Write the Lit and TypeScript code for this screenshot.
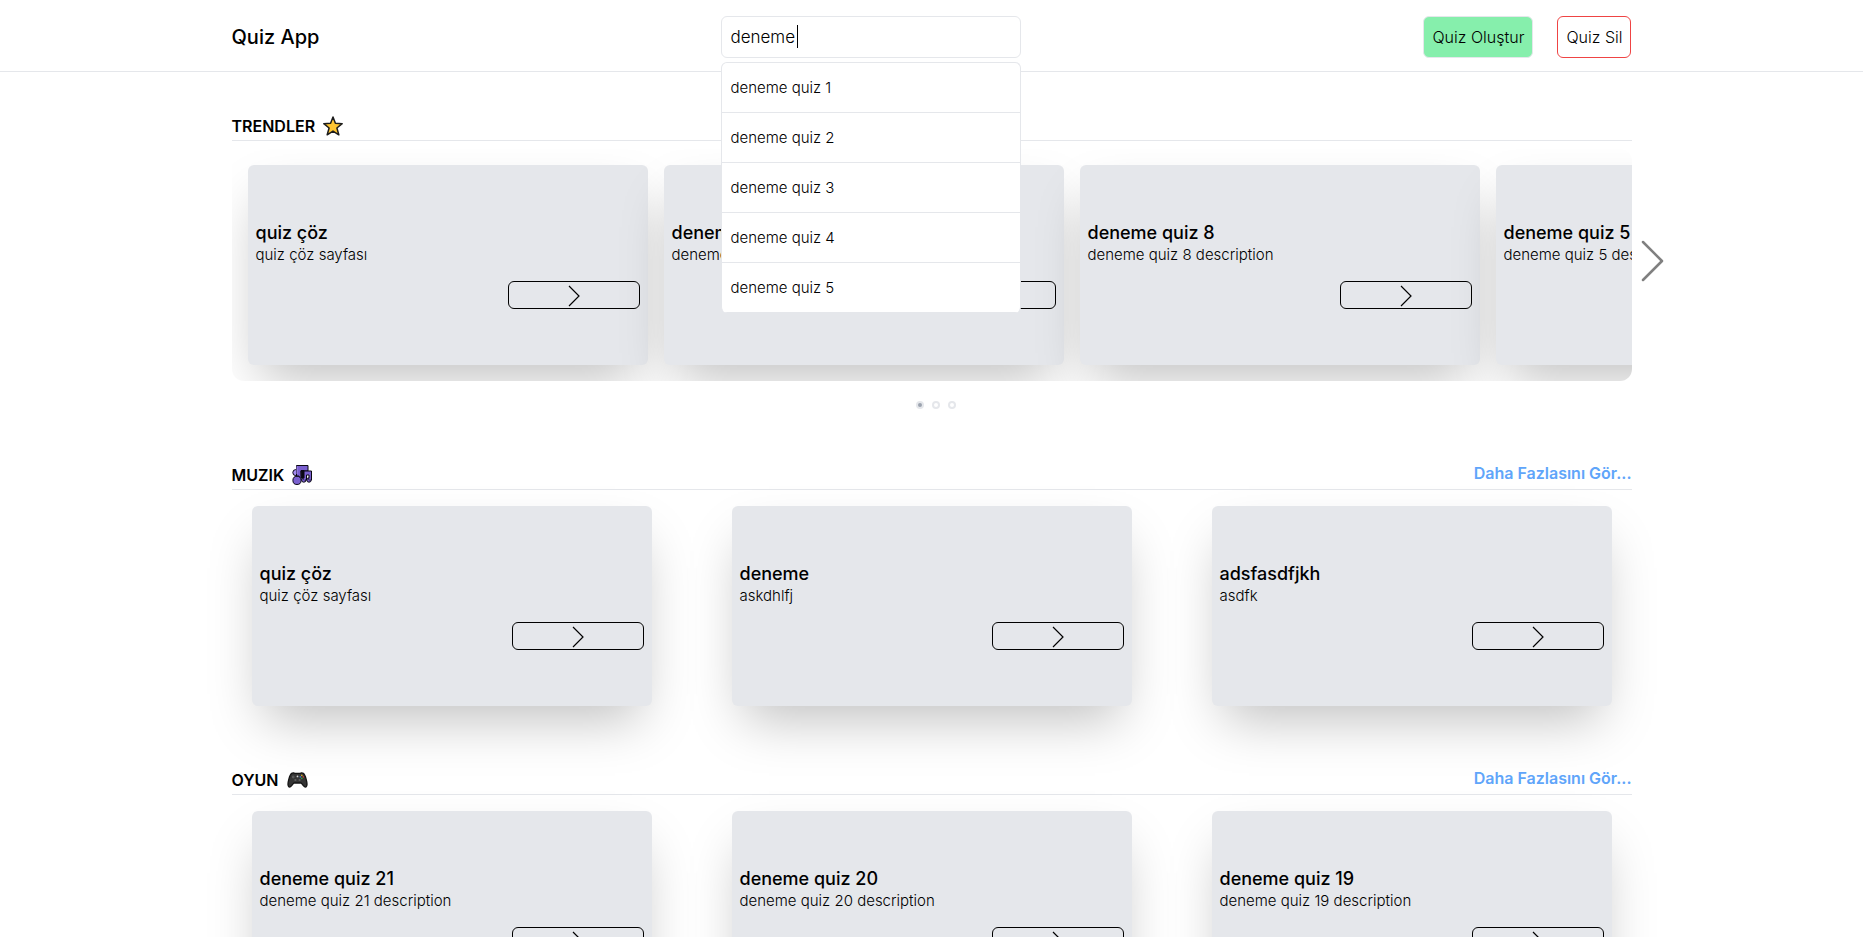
import { LitElement, html, css, svg } from "lit";
import { customElement, property, state } from "lit/decorators.js";

interface Quiz {
  title: string;
  description: string;
}

interface Category {
  name: string;
  icon: unknown;
  quizzes: Quiz[];
}

const quiz = (title: string, description = `${title} description`): Quiz => ({ title, description });

const starIcon = svg`
  <svg width="20" height="20" viewBox="0 0 20 20" aria-hidden="true">
    <path d="M10 1 L12.4 7.3 L19.2 7.7 L13.9 12 L15.8 18.8 L10 15.1 L4.2 18.8 L6.1 12 L0.8 7.7 L7.6 7.3 Z"
      fill="#ffc531" stroke="#1c1c1c" stroke-width="1.5" stroke-linejoin="round" />
  </svg>`;

const musicIcon = svg`
  <svg width="20" height="20" viewBox="0 0 20 20" aria-hidden="true" stroke="#0b0814" stroke-width="1">
    <circle cx="3.8" cy="7.6" r="3" fill="#a48cf0" />
    <path d="M4.5 0.5 H16 V6 H9 V15.4 H7 V11 H4.5 Z" fill="#7a60cf" />
    <path d="M5 1.2 V9" stroke="#a48cf0" />
    <circle cx="5" cy="15.4" r="4.1" fill="#7a60cf" />
    <path d="M9 5.5 H12 V13 H9.5 Z" fill="#0b0814" />
    <circle cx="11.8" cy="15" r="2.2" fill="#7a60cf" />
    <circle cx="17" cy="15" r="2.2" fill="#7a60cf" />
    <path d="M12 6 H19.5 V15 H17 V10 H14.5 V15 H12 Z" fill="#7a60cf" />
    <path d="M12.6 13 V15.6 M17.9 13 V15.6" stroke="#7a60cf" />
  </svg>`;

const gamepadIcon = svg`
  <svg width="21" height="20" viewBox="0 0 21 20" aria-hidden="true">
    <path d="M5 3.2 C6 2.6 7.2 2.9 8 3.4 H13 C13.8 2.9 15 2.6 16 3.2 C17.6 4 18.4 6.4 19.2 9.4 C20.2 13 20.6 16 19 17 C17.4 17.8 15.6 14.2 14 13 H7 C5.4 14.2 3.6 17.8 2 17 C0.4 16 0.8 13 1.8 9.4 C2.6 6.4 3.4 4 5 3.2 Z"
      fill="#343434" stroke="#141414" stroke-width="1.3" />
    <circle cx="6.2" cy="7" r="1.4" fill="#595959" />
    <circle cx="10.5" cy="6.4" r="0.9" fill="#d8d8d8" />
    <circle cx="8.4" cy="10" r="1.1" fill="#5f5f5f" />
    <circle cx="12.6" cy="10" r="1.1" fill="#5f5f5f" />
    <circle cx="14.8" cy="5.4" r="0.8" fill="#d9a928" />
    <circle cx="13.3" cy="6.9" r="0.8" fill="#3f78c9" />
    <circle cx="16.3" cy="6.9" r="0.8" fill="#c8402f" />
    <circle cx="14.8" cy="8.4" r="0.8" fill="#35a53b" />
  </svg>`;

@customElement("quiz-card")
export class QuizCard extends LitElement {
  @property({ attribute: false }) quiz!: Quiz;

  static styles = css`
    :host {
      display: block;
      flex: none;
      width: 400px;
      max-width: 100%;
    }
    .card {
      box-sizing: border-box;
      height: 200px;
      padding: 8px;
      display: flex;
      flex-direction: column;
      justify-content: center;
      border-radius: 6px;
      background: #e5e7eb;
      box-shadow: 0 25px 50px -12px rgba(0, 0, 0, 0.25);
    }
    .title {
      margin: 0;
      font-size: 18px;
      line-height: 24px;
      font-weight: 500;
      white-space: nowrap;
    }
    .description {
      margin: 0 0 16px;
      font-size: 15px;
      line-height: 20px;
      font-weight: 300;
      white-space: nowrap;
    }
    .open {
      box-sizing: border-box;
      align-self: flex-end;
      display: flex;
      align-items: center;
      justify-content: center;
      width: 132px;
      height: 28px;
      padding: 0;
      border: 1px solid #000;
      border-radius: 6px;
      background: transparent;
      color: #000;
      cursor: pointer;
    }
  `;

  render() {
    return html`
      <article class="card">
        <h3 class="title">${this.quiz.title}</h3>
        <p class="description">${this.quiz.description}</p>
        <button class="open" type="button" aria-label="${this.quiz.title}">
          <svg width="24" height="24" viewBox="0 0 24 24" fill="none" stroke="currentColor" stroke-width="1.2" aria-hidden="true">
            <path d="M7 3 L17 13 L7 23" />
          </svg>
        </button>
      </article>
    `;
  }
}

@customElement("app-root")
export class AppRoot extends LitElement {
  @state() private query = "deneme";
  @state() private slide = 0;

  private suggestions = [1, 2, 3, 4, 5].map((n) => `deneme quiz ${n}`);

  private trends: Quiz[] = [
    quiz("quiz çöz", "quiz çöz sayfası"),
    quiz("deneme quiz 9"),
    quiz("deneme quiz 8"),
    quiz("deneme quiz 5"),
  ];

  private categories: Category[] = [
    {
      name: "MUZIK",
      icon: musicIcon,
      quizzes: [quiz("quiz çöz", "quiz çöz sayfası"), quiz("deneme", "askdhlfj"), quiz("adsfasdfjkh", "asdfk")],
    },
    {
      name: "OYUN",
      icon: gamepadIcon,
      quizzes: [quiz("deneme quiz 21"), quiz("deneme quiz 20"), quiz("deneme quiz 19")],
    },
  ];

  static styles = css`
    :host {
      display: block;
      min-height: 100vh;
      background: #fff;
      color: #000;
      font-family: Inter, "Open Sans", sans-serif;
      font-size: 16px;
      line-height: 24px;
    }
    .header {
      padding: 16px 0 13px;
      border-bottom: 1px solid #e5e7eb;
    }
    .container {
      width: 100%;
      max-width: 1400px;
      margin: 0 auto;
    }
    .bar {
      display: flex;
      align-items: center;
      justify-content: space-between;
    }
    .brand {
      color: inherit;
      text-decoration: none;
      font-size: 20px;
      line-height: 28px;
      font-weight: 500;
    }
    .search {
      position: relative;
      width: 300px;
    }
    .search-input {
      box-sizing: border-box;
      display: block;
      width: 100%;
      height: 42px;
      padding: 8px;
      border: 1px solid #e5e7eb;
      border-radius: 6px;
      outline: none;
      background: #fff;
      color: inherit;
      font: inherit;
      font-size: 17px;
      font-weight: 300;
      caret-color: transparent;
    }
    .caret {
      position: absolute;
      top: 9px;
      left: 76px;
      width: 1px;
      height: 23px;
      background: #000;
    }
    .suggestions {
      position: absolute;
      z-index: 10;
      top: 100%;
      left: 0;
      right: 0;
      margin: 4px 0 0;
      padding: 0;
      list-style: none;
      overflow: hidden;
      border: 1px solid #e5e7eb;
      border-bottom: 0;
      border-radius: 6px;
      background: #fff;
    }
    .suggestion {
      border-bottom: 1px solid #e5e7eb;
    }
    .suggestion-link {
      display: block;
      padding: 15px 8px 14px;
      color: inherit;
      text-decoration: none;
      font-size: 15px;
      line-height: 20px;
      font-weight: 300;
    }
    .actions {
      display: flex;
      gap: 24px;
    }
    .action {
      box-sizing: border-box;
      height: 42px;
      padding: 0 8px;
      border: 1px solid #e5e7eb;
      border-radius: 6px;
      background: #fff;
      color: inherit;
      font: inherit;
      font-weight: 300;
      cursor: pointer;
    }
    .create {
      background: #86efac;
    }
    .delete {
      border-color: #ef4444;
    }
    .main {
      padding: 40px 0;
    }
    .section-head {
      display: flex;
      align-items: flex-start;
      justify-content: space-between;
      border-bottom: 1px solid #e5e7eb;
    }
    .section-title {
      display: flex;
      align-items: center;
      gap: 8px;
      margin: 0;
      font-size: 16px;
      line-height: 28px;
      font-weight: 600;
    }
    .more {
      color: #60a5fa;
      text-decoration: none;
      font-weight: 600;
    }
    .carousel {
      position: relative;
      margin-top: 8px;
    }
    .track {
      display: flex;
      gap: 16px;
      padding: 16px;
      overflow: hidden;
      border-radius: 12px;
    }
    .next {
      position: absolute;
      top: 88px;
      left: 100%;
      display: flex;
      padding: 0;
      border: 0;
      background: none;
      color: #808080;
      cursor: pointer;
    }
    .dots {
      display: flex;
      justify-content: center;
      gap: 8px;
      padding: 20px 0 52px 8px;
    }
    .dot {
      box-sizing: border-box;
      width: 8px;
      height: 8px;
      padding: 0;
      border: 2px solid #e5e7eb;
      border-radius: 50%;
      background: #fff;
      cursor: pointer;
    }
    .dot[aria-current="true"] {
      background: #9ca3af;
    }
    .grid {
      display: grid;
      grid-template-columns: repeat(3, minmax(0, 1fr));
      gap: 40px;
      justify-items: center;
      padding: 16px 0 60px;
    }
  `;

  private onInput(event: Event) {
    this.query = (event.target as HTMLInputElement).value;
  }

  render() {
    return html`
      <header class="header">
        <div class="container bar">
          <a class="brand" href="#">Quiz App</a>
          <div class="search">
            <input class="search-input" type="text" aria-label="Quiz ara" .value=${this.query} @input=${this.onInput} />
            ${this.query === "deneme" ? html`<span class="caret"></span>` : null}
            <ul class="suggestions">
              ${this.suggestions
                .filter((name) => name.includes(this.query))
                .map((name) => html`<li class="suggestion"><a class="suggestion-link" href="#">${name}</a></li>`)}
            </ul>
          </div>
          <nav class="actions">
            <button class="action create" type="button">Quiz Oluştur</button>
            <button class="action delete" type="button">Quiz Sil</button>
          </nav>
        </div>
      </header>
      <main class="container main">
        <section>
          <div class="section-head">
            <h2 class="section-title">TRENDLER ${starIcon}</h2>
          </div>
          <div class="carousel">
            <div class="track">${this.trends.map((item) => html`<quiz-card .quiz=${item}></quiz-card>`)}</div>
            <button class="next" type="button" aria-label="Sonraki" @click=${() => (this.slide = (this.slide + 1) % 3)}>
              <svg width="40" height="48" viewBox="0 0 40 48" fill="none" stroke="currentColor" stroke-width="2.5"
                stroke-linecap="round" stroke-linejoin="round" aria-hidden="true">
                <path d="M11 5 L30 24 L11 43" />
              </svg>
            </button>
          </div>
          <div class="dots">
            ${[0, 1, 2].map(
              (n) => html`<button class="dot" type="button" aria-label="Sayfa ${n + 1}"
                aria-current=${n === this.slide ? "true" : "false"} @click=${() => (this.slide = n)}></button>`
            )}
          </div>
        </section>
        ${this.categories.map(
          (category) => html`
            <section>
              <div class="section-head">
                <h2 class="section-title">${category.name} ${category.icon}</h2>
                <a class="more" href="#">Daha Fazlasını Gör...</a>
              </div>
              <div class="grid">${category.quizzes.map((item) => html`<quiz-card .quiz=${item}></quiz-card>`)}</div>
            </section>
          `
        )}
      </main>
    `;
  }
}
